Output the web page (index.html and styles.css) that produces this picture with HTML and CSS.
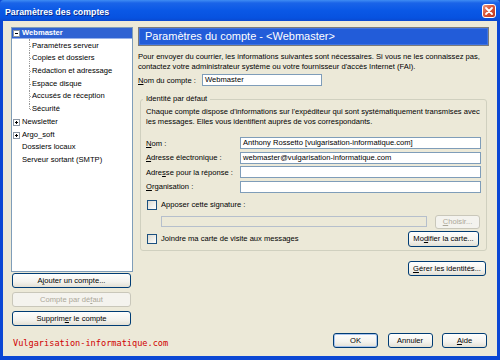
FILE: index.html
```html
<!DOCTYPE html>
<html lang="fr">
<head>
    <meta charset="UTF-8">
    <title>Paramètres des comptes</title>
    <link rel="stylesheet" href="styles.css">
</head>
<body>

    <div class="window">
        <div class="titlebar">
            <span class="title">Paramètres des comptes</span>
            <span class="close">
                <svg width="14" height="14" viewBox="0 0 14 14">
                    <defs>
                        <linearGradient id="cg" x1="0" y1="0" x2="1" y2="1">
                            <stop offset="0" stop-color="#f0a085"/>
                            <stop offset="0.45" stop-color="#d9573a"/>
                            <stop offset="1" stop-color="#b8341a"/>
                        </linearGradient>
                    </defs>
                    <rect x="0.5" y="0.5" width="13" height="13" rx="2.5" fill="url(#cg)" stroke="#fff"/>
                    <path d="M4 4 L10 10 M10 4 L4 10" stroke="#fff" stroke-width="1.8" stroke-linecap="round"/>
                </svg>
            </span>
        </div>

        <div class="client">
            <div class="main">
                <!-- colonne de gauche : arbre des comptes -->
                <div class="side">
                    <div class="tree">
                        <div class="row selected"><span class="expander minus"></span><b>Webmaster</b></div>
                        <div class="children">
                            <div class="row leaf">Paramètres serveur</div>
                            <div class="row leaf">Copies et dossiers</div>
                            <div class="row leaf">Rédaction et adressage</div>
                            <div class="row leaf">Espace disque</div>
                            <div class="row leaf">Accusés de réception</div>
                            <div class="row leaf">Sécurité</div>
                        </div>
                        <div class="row"><span class="expander plus"></span>Newsletter</div>
                        <div class="row"><span class="expander plus"></span>Argo_soft</div>
                        <div class="row flat">Dossiers locaux</div>
                        <div class="row flat">Serveur sortant (SMTP)</div>
                    </div>
                    <button class="btn side-btn first">A<u>j</u>outer un compte...</button>
                    <button class="btn side-btn disabled">Compte par dé<u>f</u>aut</button>
                    <button class="btn side-btn">Supprim<u>e</u>r le compte</button>
                </div>

                <!-- panneau de droite -->
                <div class="panel">
                    <div class="panel-head">Paramètres du compte - &lt;Webmaster&gt;</div>
                    <p class="intro">Pour envoyer du courrier, les informations suivantes sont nécessaires. Si vous ne les connaissez pas,<br>contactez votre administrateur système ou votre fournisseur d'accès Internet (FAI).</p>
                    <div class="account">
                        <span class="account-label"><u>N</u>om du compte :</span>
                        <span class="field account-field">Webmaster</span>
                    </div>

                    <fieldset class="identity">
                        <legend>Identité par défaut</legend>
                        <p class="identity-text">Chaque compte dispose d'informations sur l'expéditeur qui sont systématiquement transmises avec<br>les messages. Elles vous identifient auprès de vos correspondants.</p>
                        <div class="form">
                            <span><u>N</u>om :</span>
                            <span class="field">Anthony Rossetto [vulgarisation-informatique.com]</span>
                            <span><u>A</u>dresse électronique :</span>
                            <span class="field">webmaster@vulgarisation-informatique.com</span>
                            <span>Adre<u>s</u>se pour la réponse :</span>
                            <span class="field"></span>
                            <span><u>O</u>rganisation :</span>
                            <span class="field"></span>
                        </div>
                        <div class="check-row sig">
                            <span class="check"></span>Apposer cette signature :
                        </div>
                        <div class="sig-row">
                            <span class="field disabled-field"></span>
                            <button class="btn disabled choose"><u>C</u>hoisir...</button>
                        </div>
                        <div class="check-row card">
                            <span class="check"></span>Joindre ma carte de visite aux messages
                            <button class="btn edit-card">Mo<u>d</u>ifier la carte...</button>
                        </div>
                    </fieldset>

                    <div class="manage">
                        <button class="btn manage-btn"><u>G</u>érer les identités...</button>
                    </div>
                </div>
            </div>

            <div class="footer">
                <span class="brand">Vulgarisation-informatique.com</span>
                <div class="actions">
                    <button class="btn default">OK</button>
                    <button class="btn">Annuler</button>
                    <button class="btn"><u>A</u>ide</button>
                </div>
            </div>
        </div>
    </div>

</body>
</html>
```

FILE: styles.css
```css
* {
    box-sizing: border-box;
}
html, body {
    margin: 0;
}
body {
    width: 500px;
    height: 360px;
    overflow: hidden;
    font-family: "Liberation Sans", Arial, sans-serif;
    font-size: 7.6px;
    color: #000;
}
u {
    text-decoration: underline;
    text-underline-offset: 1px;
}

.window {
    width: 500px;
    height: 360px;
    display: flex;
    flex-direction: column;
    background: #0b47d4;
}
.titlebar {
    height: 21px;
    display: flex;
    align-items: center;
    justify-content: space-between;
    padding: 0 4px 0 5px;
    background: linear-gradient(to bottom, #3f8cf3 0, #1a64e8 3px, #0a58e6 50%, #0752e0 85%, #0a48cf 100%);
    border-radius: 4px 4px 0 0;
}
.title {
    color: #fff;
    font-weight: bold;
    font-size: 8.8px;
    text-shadow: 1px 1px 0 #0a2a8c;
    margin-top: 2px;
}
.close {
    display: flex;
    margin-top: 1px;
}

.client {
    flex: 1;
    margin: 0 3px 4px;
    padding: 6px 8px 0;
    background: #ece9d8;
    display: flex;
    flex-direction: column;
}
.main {
    height: 300px;
    display: flex;
}

/* arbre */
.side {
    width: 122px;
    display: flex;
    flex-direction: column;
}
.tree {
    height: 245px;
    border: 1px solid #7f9db9;
    background: #fff;
}
.row {
    height: 12.7px;
    line-height: 10.5px;
    display: flex;
    align-items: flex-start;
    white-space: nowrap;
    padding-left: 10px;
}
.row.selected {
    color: #fff;
    background: linear-gradient(#2f63d3, #2f63d3) 0 0 / 100% 10.5px no-repeat;
}
.expander {
    width: 7px;
    height: 7px;
    margin: 2px 2px 0 -9px;
    border: 1px solid #8c97a5;
    background: #fff;
    position: relative;
}
.expander::before,
.expander.plus::after {
    content: "";
    position: absolute;
    background: #000;
}
.expander::before {
    left: 1px;
    top: 2px;
    width: 3px;
    height: 1px;
}
.expander.plus::after {
    left: 2px;
    top: 1px;
    width: 1px;
    height: 3px;
}
.leaf {
    position: relative;
    padding-left: 20px;
}
.leaf::before {
    content: "";
    position: absolute;
    left: 17px;
    top: 0;
    height: 12.7px;
    border-left: 1px dotted #9a9a9a;
}
.leaf:first-child::before {
    top: -2px;
    height: 14.7px;
}
.leaf:last-child::before {
    height: 5px;
}
.leaf::after {
    content: "";
    position: absolute;
    left: 18px;
    top: 5px;
    width: 3px;
    border-top: 1px dotted #9a9a9a;
}

/* boutons */
.btn {
    height: 15px;
    padding: 0;
    border: 1px solid #003c74;
    border-radius: 3px;
    background: linear-gradient(#fefefd, #f4f3ee 60%, #e3e0d5);
    font: inherit;
    color: #000;
    text-align: center;
    line-height: 13px;
    white-space: nowrap;
}
.btn.disabled {
    border-color: #c9c7ba;
    color: #aca899;
    background: #f4f3ee;
}
.btn.default {
    box-shadow: inset 0 0 0 1px #a9c4ee;
}
.side-btn {
    width: 119px;
    margin: 4px 0 0 1px;
}
.side-btn.first {
    margin-top: 1px;
}

/* panneau */
.panel {
    width: 351px;
    margin-left: 5px;
    display: flex;
    flex-direction: column;
}
.panel-head {
    height: 19px;
    border: 1px solid #7a7a7a;
    box-shadow: inset 0 0 0 1px #3f73e2;
    background: #225cd9;
    color: #fff;
    font-size: 11px;
    line-height: 17px;
    padding-left: 6px;
}
.intro {
    margin: 6px 0 0;
    line-height: 10px;
}
.account {
    display: flex;
    align-items: center;
    margin-top: 2px;
    height: 12px;
}
.account-label {
    width: 64px;
}
.field {
    height: 12px;
    border: 1px solid #7f9db9;
    background: #fff;
    padding-left: 2px;
    line-height: 10px;
    white-space: nowrap;
    overflow: hidden;
}
.account-field {
    width: 120px;
}

.identity {
    margin: 8px 2px 0;
    padding: 0 5px 3px;
    border: 1px solid #d0d0bf;
    border-radius: 3px;
    min-width: 0;
}
.identity legend {
    margin-left: -3px;
    padding: 0 3px;
    line-height: 10px;
}
.identity-text {
    margin: 3px 0 0;
    line-height: 10px;
}
.form {
    margin-top: 10px;
    display: grid;
    grid-template-columns: 94px 241px;
    grid-auto-rows: 12px;
    row-gap: 2.67px;
    align-items: center;
}
.check-row {
    display: flex;
    align-items: center;
    white-space: nowrap;
}
.check {
    width: 10px;
    height: 10px;
    margin: 0 4px 0 1px;
    border: 1px solid #1c5180;
    background: linear-gradient(135deg, #dcdad0, #fff);
}
.check-row.sig {
    margin-top: 7px;
    height: 10px;
}
.sig-row {
    margin-top: 5px;
    height: 14px;
    display: flex;
    align-items: center;
    padding-left: 15px;
}
.disabled-field {
    width: 266px;
    height: 11px;
    background: #ece9d8;
    border-color: #b6bfcc;
}
.choose {
    width: 45px;
    height: 14px;
    line-height: 12px;
    margin-left: 8px;
}
.check-row.card {
    margin-top: 2px;
    height: 16px;
}
.edit-card {
    width: 71px;
    height: 16px;
    line-height: 14px;
    margin: 0 2px 0 auto;
}
.manage {
    margin-top: 10px;
    display: flex;
    justify-content: flex-end;
}
.manage-btn {
    width: 78px;
    margin-right: 3px;
}

/* bas de fenêtre */
.footer {
    margin-top: 6px;
    height: 15px;
    display: flex;
    align-items: flex-end;
    justify-content: space-between;
}
.brand {
    font-family: "DejaVu Sans Mono", "Liberation Mono", monospace;
    font-size: 8.6px;
    color: #d00000;
    margin-left: 2px;
    line-height: 10px;
}
.actions {
    display: flex;
    gap: 9.5px;
    margin-right: 2px;
}
.actions .btn {
    width: 45px;
}
```
